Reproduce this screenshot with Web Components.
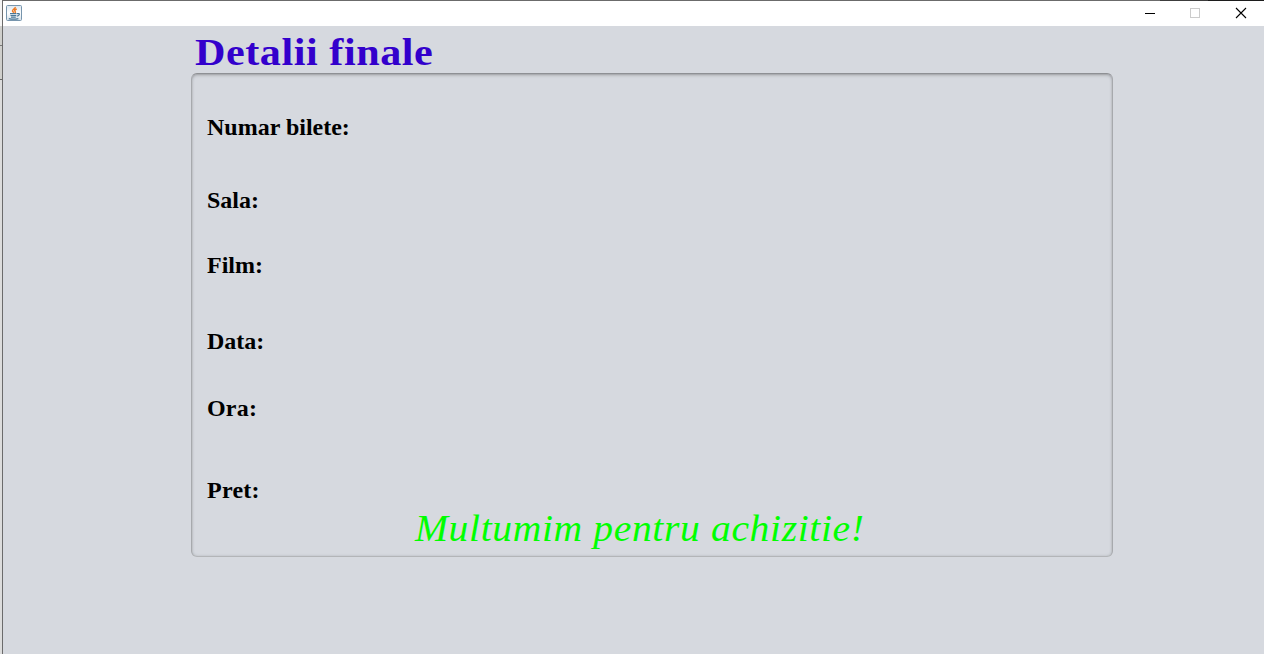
<!DOCTYPE html>
<html lang="ro">
<head>
<meta charset="utf-8">
<title>Detalii finale</title>
<style>
html, body { margin: 0; height: 100%; overflow: hidden; background: #d6d9df; font-family: "Liberation Serif", serif; }
</style>
</head>
<body>
<app-window>
  <title-bar slot="bar"></title-bar>
  <page-heading>Detalii finale</page-heading>
  <detail-panel>
    <detail-label>Numar bilete:</detail-label>
    <detail-label style="--gap:45px">Sala:</detail-label>
    <detail-label style="--gap:37px">Film:</detail-label>
    <detail-label style="--gap:48px">Data:</detail-label>
    <detail-label style="--gap:39px;--track:.2px">Ora:</detail-label>
    <detail-label style="--gap:54px;--track:.25px">Pret:</detail-label>
    <thanks-note slot="footer">Multumim pentru achizitie!</thanks-note>
  </detail-panel>
</app-window>
<script>
function define(name, html) {
  const t = document.createElement('template');
  t.innerHTML = html;
  customElements.define(name, class extends HTMLElement {
    constructor() {
      super();
      this.attachShadow({ mode: 'open' }).append(t.content.cloneNode(true));
    }
  });
}

define('app-window', `<style>
:host { display: grid; grid-template-columns: 2px 1px 1fr; width: 1264px; height: 654px; box-sizing: border-box; background: #d6d9df; }
.outside { background: linear-gradient(#777,#777) 0 45px/2px 1px no-repeat, linear-gradient(#666,#666) 0 79px/2px 1px no-repeat, linear-gradient(#f4f4f4 0 26px, #cfcfcc 26px 80px, #dcdcdc 80px); }
.edge { background: #6b6b6b; }
.main { padding-left: 188px; }
</style>
<div class="outside"></div><div class="edge"></div>
<div><slot name="bar"></slot><div class="main"><slot></slot></div></div>`);

define('title-bar', `<style>
:host { display: flex; height: 26px; box-sizing: border-box; background: linear-gradient(90deg, #6b6b6b 0 1157px, #3c3c3c 1157px 1205px, #1c1c1c 1205px) 0 0/100% 1px no-repeat, #fff; justify-content: space-between; }
.icon { margin: 5px 0 0 3px; }
svg { display: block; }
</style>
<svg class="icon" width="16" height="16" viewBox="0 0 16 16">
<defs><linearGradient id="g" x1="0" y1="0" x2="0" y2="1"><stop offset="0" stop-color="#dce7ef"/><stop offset=".5" stop-color="#fdfeff"/><stop offset="1" stop-color="#d3dfe8"/></linearGradient></defs>
<rect x=".5" y=".5" width="15" height="15" rx="1" fill="url(#g)" stroke="#7795ad"/>
<path d="M9.200 2c.6 1.700-3.200 2.400-2.700 4 .3.800 1 1 1.100 1.900M10.700 4c-2 .9-2.600 1.600-1.500 2.500.5.500.2.900-.3 1.400" fill="none" stroke="#ec7a25" stroke-width="1.500"/>
<path d="M4 8.700h6.500M4.500 10.500h5.700M5 12.200h4.800M2.800 13.600q4.700 1.200 9.600 0M11 8.700q2.600-.5 2.300.9-.3 1.200-2.500 1.600" fill="none" stroke="#4b7898" stroke-width="1.200"/>
</svg>
<svg width="130" height="26" viewBox="0 0 130 26" shape-rendering="crispEdges">
<path d="M11 13.500h10" stroke="#000"/>
<rect x="56.500" y="8.500" width="9" height="9" fill="none" stroke="#ccc"/>
<path d="M102 8l10 10M112 8l-10 10" stroke="#000" stroke-width="1.100" shape-rendering="auto"/>
</svg>`);

define('page-heading', `<style>
:host { display: block; height: 47px; padding: 4px 0 0 4px; box-sizing: border-box; color: #3300cc; font-size: 38.500px; font-weight: bold; line-height: 44px; white-space: nowrap; letter-spacing: .5px; }
span { display: inline-block; transform: scaleX(1.095); transform-origin: 0 0; }
</style><span><slot></slot></span>`);

define('detail-panel', `<style>
:host { display: flex; flex-direction: column; width: 922px; height: 484px; box-sizing: border-box; padding: 39px 15px 0; border: 1px solid; border-color: #8e9094 #a7a9ad #b3b5b8; border-radius: 6px; box-shadow: inset 0 1px 1px #a9abb0, inset 0 2px 3px #babdc2, inset 0 0 3px #b9bcc1; }
.foot { margin: 2px 0 0 208px; }
</style><slot></slot><div class="foot"><slot name="footer"></slot></div>`);

define('detail-label', `<style>
:host { display: block; margin-top: var(--gap, 0px); color: #000; font-size: 24px; font-weight: bold; line-height: 28px; letter-spacing: var(--track, 0px); }
</style><slot></slot>`);

define('thanks-note', `<style>
:host { display: block; color: #00ff00; font-size: 38.500px; font-style: italic; line-height: 44px; white-space: nowrap; letter-spacing: .600px; }
span { display: inline-block; transform: scaleX(1.029); transform-origin: 0 0; }
</style><span><slot></slot></span>`);
</script>
</body>
</html>
